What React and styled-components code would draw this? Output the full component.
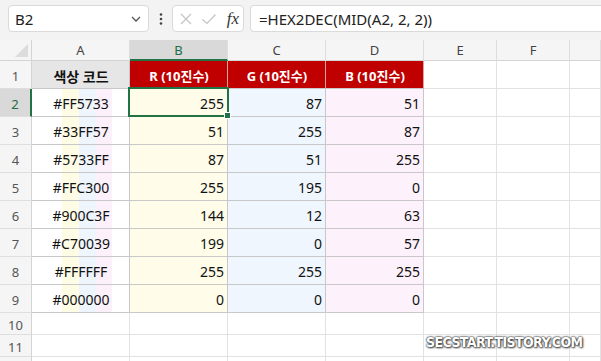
import React from 'react'
import styled, { createGlobalStyle, css } from 'styled-components'

const GlobalStyle = createGlobalStyle`
    body{
        margin:0;
        background:#fff;
        font-family:"Noto Sans","Noto Sans CJK KR",sans-serif;
    }
`

const Page = styled.div`
    position:relative;
    width:601px;
    height:361px;
    overflow:hidden;
    background:#fff;
`

const TopBar = styled.div`
    height:40px;
    box-sizing:border-box;
    padding:5px 0 0 8px;
    background:#f3f3f3;
    display:flex;
    align-items:flex-start;
`
const NameBox = styled.div`
    width:141px;
    height:27px;
    box-sizing:border-box;
    background:#fff;
    border:1px solid #dadada;
    border-radius:4px;
    display:flex;
    align-items:center;
    justify-content:space-between;
    padding:0 6px 0 6px;
    font-size:15px;
    color:#222;
`
const Dots = styled.div`
    width:23px;
    height:27px;
    display:flex;
    align-items:center;
    justify-content:center;
`
const FxBox = styled.div`
    width:72px;
    height:27px;
    box-sizing:border-box;
    background:#fff;
    border:1px solid #dadada;
    border-radius:4px;
    display:flex;
    align-items:center;
    padding:0 4px 0 6px;
    gap:8px;
`
const Fx = styled.span`
    margin-left:auto;
    font-family:"Liberation Serif",serif;
    font-style:italic;
    font-size:17px;
    color:#333;
`
const Formula = styled.div`
    flex:1;
    margin-left:6px;
    height:27px;
    box-sizing:border-box;
    background:#fff;
    border:1px solid #dadada;
    border-right:none;
    border-radius:4px 0 0 4px;
    display:flex;
    align-items:center;
    padding-left:8px;
    font-size:15px;
    color:#222;
`

const Grid = styled.div`
    display:grid;
    grid-template-columns:32px 98px 98px 98px 98px 73px 73px 1fr;
    grid-template-rows:21px repeat(9,28px) 22px 22px 22px;
`

const Corner = styled.div`
    position:relative;
    background:#f5f5f5;
    border-right:1px solid #d4d4d4;
    border-bottom:1px solid #d4d4d4;
    &::after{
        content:'';
        position:absolute;
        right:3px;
        bottom:3px;
        border-style:solid;
        border-width:0 0 13px 13px;
        border-color:transparent transparent #dcdcdc transparent;
    }
`
const ColHead = styled.div`
    box-sizing:border-box;
    background:#f5f5f5;
    border-right:1px solid #dedede;
    border-bottom:1px solid #d4d4d4;
    display:flex;
    align-items:center;
    justify-content:center;
    font-size:13px;
    color:#444;
    ${props=>props.$selected && css`
        background:#d9d9d9;
        color:#1e6e42;
        border-bottom:2px solid #217346;
    `}
`
const RowHead = styled.div`
    box-sizing:border-box;
    background:#f5f5f5;
    border-right:1px solid #d4d4d4;
    border-bottom:1px solid #dedede;
    display:flex;
    align-items:center;
    justify-content:center;
    padding-top:2px;
    font-size:13px;
    color:#555;
    ${props=>props.$selected && css`
        background:#d9d9d9;
        color:#1e6e42;
        border-right:2px solid #217346;
    `}
`

const tints = {
    yellow:'#fffde9',
    blue:'#eff6fd',
    pink:'#fdf1fb',
}

const Cell = styled.div`
    position:relative;
    box-sizing:border-box;
    border-right:1px solid #e2e2e2;
    border-bottom:1px solid #e2e2e2;
    display:flex;
    align-items:center;
    padding:2px 3px 0 4px;
    font-size:14px;
    color:#111;
    ${props=>props.$variant==='title' && css`
        background:#e7e6e6;
        border-color:#c8c8c8;
        justify-content:center;
        font-weight:bold;
        font-size:14px;
    `}
    ${props=>props.$variant==='head' && css`
        background:#c00000;
        border-right-color:#d9a3a3;
        border-bottom-color:#c8c8c8;
        justify-content:center;
        color:#fff;
        font-weight:bold;
        font-size:13px;
    `}
    ${props=>props.$variant==='code' && css`
        justify-content:center;
        border-color:#c8c8c8;
        background:linear-gradient(to right,
            transparent 30px,#fffce6 30px,#fffce6 47px,
            #eef5fc 47px,#eef5fc 64px,
            #fcf0fb 64px,#fcf0fb 80px,transparent 80px);
    `}
    ${props=>props.$variant==='num' && css`
        justify-content:flex-end;
        border-color:#c8c8c8;
        background:${tints[props.$tint]};
    `}
    ${props=>props.$active && css`
        &::before{
            content:'';
            position:absolute;
            left:-2px;
            top:-2px;
            right:-2px;
            bottom:-1px;
            border:2px solid #217346;
            z-index:2;
        }
        &::after{
            content:'';
            position:absolute;
            right:-4px;
            bottom:-3px;
            width:5px;
            height:5px;
            background:#217346;
            border:1px solid #fff;
            z-index:3;
        }
    `}
`

const Watermark = styled.div`
    position:absolute;
    left:426px;
    top:334px;
    font-family:"DejaVu Sans Condensed","DejaVu Sans",sans-serif;
    font-weight:bold;
    font-size:14px;
    letter-spacing:-0.6px;
    color:#fff;
    text-shadow:0 0 2px #333,0 0 2px #333,1px 1px 2px #555;
`

const data = [
    ['#FF5733',255,87,51],
    ['#33FF57',51,255,87],
    ['#5733FF',87,51,255],
    ['#FFC300',255,195,0],
    ['#900C3F',144,12,63],
    ['#C70039',199,0,57],
    ['#FFFFFF',255,255,255],
    ['#000000',0,0,0],
]

const letters = ['A','B','C','D','E','F','']

const Chevron = () => (
    <svg width="12" height="8" viewBox="0 0 12 8">
        <path d="M2 2 L6 6 L10 2" fill="none" stroke="#555" strokeWidth="1.3"/>
    </svg>
)

const App = () => {
    return (
    <Page>
        <GlobalStyle/>
        <TopBar>
            <NameBox>
                <span>B2</span>
                <Chevron/>
            </NameBox>
            <Dots>
                <svg width="4" height="12" viewBox="0 0 4 12">
                    <circle cx="2" cy="1.5" r="1.3" fill="#444"/>
                    <circle cx="2" cy="6" r="1.3" fill="#444"/>
                    <circle cx="2" cy="10.5" r="1.3" fill="#444"/>
                </svg>
            </Dots>
            <FxBox>
                <svg width="14" height="14" viewBox="0 0 14 14">
                    <path d="M2 2 L12 12 M12 2 L2 12" stroke="#c4c4c4" strokeWidth="1.2"/>
                </svg>
                <svg width="16" height="14" viewBox="0 0 16 14">
                    <path d="M1.5 7.5 L6 11.5 L14.5 2.5" fill="none" stroke="#c4c4c4" strokeWidth="1.2"/>
                </svg>
                <Fx>fx</Fx>
            </FxBox>
            <Formula>=HEX2DEC(MID(A2, 2, 2))</Formula>
        </TopBar>
        <Grid>
            <Corner/>
            {letters.map((l,i)=>(
                <ColHead key={i} $selected={l==='B'}>{l}</ColHead>
            ))}

            <RowHead>1</RowHead>
            <Cell $variant="title">색상 코드</Cell>
            <Cell $variant="head">R (10진수)</Cell>
            <Cell $variant="head">G (10진수)</Cell>
            <Cell $variant="head">B (10진수)</Cell>
            <Cell/><Cell/><Cell/>

            {data.map((row,i)=>(
                <React.Fragment key={row[0]}>
                    <RowHead $selected={i===0}>{i+2}</RowHead>
                    <Cell $variant="code">{row[0]}</Cell>
                    <Cell $variant="num" $tint="yellow" $active={i===0}>{row[1]}</Cell>
                    <Cell $variant="num" $tint="blue">{row[2]}</Cell>
                    <Cell $variant="num" $tint="pink">{row[3]}</Cell>
                    <Cell/><Cell/><Cell/>
                </React.Fragment>
            ))}

            {[10,11,''].map((n,i)=>(
                <React.Fragment key={i}>
                    <RowHead>{n}</RowHead>
                    <Cell/><Cell/><Cell/><Cell/><Cell/><Cell/><Cell/>
                </React.Fragment>
            ))}
        </Grid>
        <Watermark>SECSTART.TISTORY.COM</Watermark>
    </Page>
    )
}

export default App
